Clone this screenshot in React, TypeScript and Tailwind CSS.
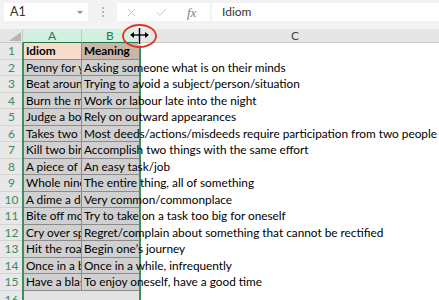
import React from "react";
import { X, Check } from "lucide-react";

const rows: [string, string][] = [
  ["Idiom", "Meaning"],
  ["Penny for your thoughts", "Asking someone what is on their minds"],
  ["Beat around the bush", "Trying to avoid a subject/person/situation"],
  ["Burn the midnight oil", "Work or labour late into the night"],
  ["Judge a book by its cover", "Rely on outward appearances"],
  ["Takes two to tango", "Most deeds/actions/misdeeds require participation from two people"],
  ["Kill two birds with one stone", "Accomplish two things with the same effort"],
  ["A piece of cake", "An easy task/job"],
  ["Whole nine yards", "The entire thing, all of something"],
  ["A dime a dozen", "Very common/commonplace"],
  ["Bite off more than you can chew", "Try to take on a task too big for oneself"],
  ["Cry over spilt milk", "Regret/complain about something that cannot be rectified"],
  ["Hit the road", "Begin one\u2019s journey"],
  ["Once in a blue moon", "Once in a while, infrequently"],
  ["Have a blast", "To enjoy oneself, have a good time"],
];

function FormulaBar() {
  return (
    <div className="flex h-[29px] items-start bg-[#f3f3f3] pt-[3px]">
      {/* name box */}
      <div className="ml-[4px] flex h-[18px] w-[84px] items-center justify-between bg-white pl-[6px] pr-[5px]">
        <span className="text-[12.5px] leading-none text-[#333]">A1</span>
        <span className="h-0 w-0 border-x-[3px] border-t-[3px] border-x-transparent border-t-[#8a8a8a]" />
      </div>
      {/* grip dots */}
      <div className="ml-[14px] mt-[4px] flex w-[2px] flex-col gap-[2px]">
        <span className="h-[2px] w-[2px] bg-[#b8b8b8]" />
        <span className="h-[2px] w-[2px] bg-[#b8b8b8]" />
        <span className="h-[2px] w-[2px] bg-[#b8b8b8]" />
      </div>
      {/* cancel / enter / fx */}
      <div className="ml-[13px] flex h-[18px] w-[93px] items-center bg-white">
        <X size={13} strokeWidth={1.4} className="ml-[8px] text-[#b5b5b5]" />
        <Check size={13} strokeWidth={1.4} className="ml-[17px] text-[#b5b5b5]" />
        <span className="ml-[19px] text-[13px] italic leading-none text-[#808080] [font-family:'Liberation_Serif',serif]">
          fx
        </span>
      </div>
      {/* formula input */}
      <div className="ml-[2px] flex h-[18px] flex-1 items-center bg-white pl-[10px]">
        <span className="text-[12px] leading-none text-[#333]">Idiom</span>
      </div>
    </div>
  );
}

function ColumnHeaders() {
  return (
    <div className="flex h-[14px]">
      <div className="relative w-[23px] shrink-0 border-b border-r border-[#c8c8c8] bg-[#e6e6e6]">
        <svg className="absolute bottom-[1px] right-[1px]" width="12" height="9" viewBox="0 0 12 9">
          <polygon points="12,0 12,9 0,9" fill="#b5b5b5" />
        </svg>
      </div>
      <div className="flex w-[59px] shrink-0 items-center justify-center border-b border-r border-b-[#217346] border-r-[#a6d7bb] bg-[#d3efdf] text-[12px] leading-none text-[#2b7a4b]">
        A
      </div>
      <div className="flex w-[57px] shrink-0 items-center justify-center border-b border-r border-b-[#217346] border-r-[#a6d7bb] bg-[#d3efdf] text-[12px] leading-none text-[#2b7a4b]">
        B
      </div>
      <div className="flex w-[312px] shrink-0 items-center justify-center border-b border-[#c8c8c8] bg-[#e6e6e6] text-[12px] leading-none text-[#444]">
        C
      </div>
    </div>
  );
}

export default function App() {
  return (
    <div className="relative h-[300px] w-[439px] overflow-hidden bg-white text-black [font-family:Lato,'Liberation_Sans',sans-serif]">
      <FormulaBar />
      <ColumnHeaders />

      {rows.map(([idiom, meaning], i) => {
        const head = i === 0;
        return (
          <div key={i} className={`flex ${i % 2 === 0 ? "h-[17px]" : "h-4"}`}>
            <div className="flex w-[23px] shrink-0 items-center justify-center border-b border-[#d4d4d4] bg-[#e8e8e8] text-[12px] leading-none text-[#3d8a5b]">
              {i + 1}
            </div>
            <div
              className={`flex w-[59px] shrink-0 items-center overflow-hidden whitespace-nowrap border-b border-r border-[#8c8c8c] pl-[3px] text-[11.8px] leading-none ${
                head ? "bg-[#f8dccb] font-bold" : "bg-[#d0d0d0]"
              }`}
            >
              {idiom}
            </div>
            <div
              className={`relative flex w-[57px] shrink-0 items-center whitespace-nowrap border-b border-[#8c8c8c] pl-[2px] text-[11.8px] leading-none ${
                head ? "bg-[#c9b6a9] font-bold" : "bg-[#d0d0d0]"
              }`}
            >
              <span className="relative z-10">{meaning}</span>
            </div>
            <div className="flex-1" />
          </div>
        );
      })}

      {/* row 16, partly visible */}
      <div className="flex h-[12px]">
        <div className="flex w-[23px] shrink-0 items-start justify-center bg-[#e8e8e8] pt-[3px] text-[12px] leading-none text-[#3d8a5b]">
          16
        </div>
        <div className="w-[116px] shrink-0 bg-[#e3e3e3]" />
        <div className="flex-1" />
      </div>

      {/* selection of columns A:B */}
      <div className="pointer-events-none absolute bottom-0 left-[22px] top-[43px] w-[119px] border-x-2 border-[#3f8f60]" />

      {/* column-resize cursor, circled */}
      <svg className="pointer-events-none absolute left-[120px] top-[23px]" width="40" height="27" viewBox="0 0 40 27">
        <ellipse cx="19.5" cy="13" rx="16.5" ry="11" fill="none" stroke="#e2312b" strokeWidth="1.8" />
        <g stroke="#fff" strokeWidth="3" strokeLinecap="square">
          <line x1="19.5" y1="5" x2="19.5" y2="21" />
          <line x1="11" y1="12" x2="28" y2="12" />
        </g>
        <line x1="19.5" y1="5" x2="19.5" y2="21" stroke="#000" strokeWidth="1.6" />
        <line x1="12" y1="12" x2="27" y2="12" stroke="#000" strokeWidth="1.4" />
        <polygon points="10,12 14,9 14,15" fill="#000" />
        <polygon points="29,12 25,9 25,15" fill="#000" />
      </svg>
    </div>
  );
}
